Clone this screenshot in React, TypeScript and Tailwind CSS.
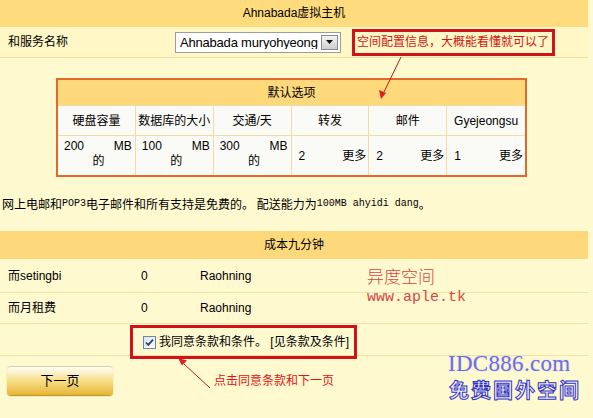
import React from 'react'

const plans = [
  { title: '硬盘容量', amount: '200', unit: 'MB', tail: '的' },
  { title: '数据库的大小', amount: '100', unit: 'MB', tail: '的' },
  { title: '交通/天', amount: '300', unit: 'MB', tail: '的' },
  { title: '转发', amount: '2', more: '更多' },
  { title: '邮件', amount: '2', more: '更多' },
  { title: 'Gyejeongsu', amount: '1', more: '更多' },
]

const fees = [
  { name: '而setingbi', price: '0', cycle: 'Raohning' },
  { name: '而月租费', price: '0', cycle: 'Raohning' },
]

function Mono({ children }: { children: React.ReactNode }) {
  return <span className="[font-family:'Liberation_Mono',monospace] text-[10px]">{children}</span>
}

export default function App() {
  return (
    <div className="relative w-[593px] h-[418px] overflow-hidden bg-[#FFF9D0] text-[12px] text-black [font-family:'Liberation_Sans','Noto_Sans_CJK_SC',sans-serif]">
      <div className="w-[588px]">
        {/* title bar */}
        <div className="h-[27px] bg-[#FEDC7E] flex items-center justify-center pb-[2px]">Ahnabada虚拟主机</div>

        {/* service name row */}
        <div className="h-[31px] bg-[#FFF7C6] border-b border-[#F2E2A2] flex items-center">
          <div className="w-[175px] pl-[8px]">和服务名称</div>
          <div className="w-[166px] h-[21px] bg-white border border-[#9c9c9c] flex items-center">
            <span className="flex-1 pl-[4px] text-[13px] leading-none whitespace-nowrap overflow-hidden tracking-[-0.2px]">Ahnabada muryohyeong</span>
            <span className="shrink-0 w-[17px] h-[15px] mr-[2px] bg-gradient-to-b from-[#f4f4f4] to-[#cfcfcf] border border-[#8a8a8a] flex items-center justify-center">
              <svg width="7" height="4" viewBox="0 0 7 4"><path d="M0 0h7L3.5 4z" fill="#111" /></svg>
            </span>
          </div>
          <div className="ml-[11px] w-[203px] h-[27px] border-[3px] border-[#D0121A] flex items-center pl-[2px] text-[#D01818] whitespace-nowrap">
            空间配置信息，大概能看懂就可以了
          </div>
        </div>

        {/* plan table */}
        <div className="ml-[56px] mt-[20px] w-[471px] border-2 border-[#E2692E] bg-[#FAFAF6]">
          <div className="h-[26px] bg-[#FDD97B] flex items-center justify-center border-b border-[#F1DCA2]">默认选项</div>
          <div className="grid grid-cols-6">
            {plans.map((p, i) => (
              <div key={p.title} className={`h-[30px] flex items-center justify-center border-b border-[#F1DCA2] ${i < 5 ? 'border-r' : ''}`}>
                {p.title}
              </div>
            ))}
            {plans.map((p, i) => (
              <div key={p.title + '-v'} className={`h-[39px] border-[#F1DCA2] ${i < 5 ? 'border-r' : ''}`}>
                {p.unit ? (
                  <div className="pt-[3px] leading-[15px]">
                    <div className="flex justify-between pl-[6px] pr-[3px]"><span>{p.amount}</span><span>{p.unit}</span></div>
                    <div className="text-center pl-[4px]">{p.tail}</div>
                  </div>
                ) : (
                  <div className="h-full flex items-center justify-between pl-[7px] pr-[2px]">
                    <span>{p.amount}</span>
                    <span>{p.more}</span>
                  </div>
                )}
              </div>
            ))}
          </div>
        </div>

        {/* note */}
        <div className="h-[54px] flex items-center pl-[2px] pb-[1px] [font-family:'Noto_Sans_CJK_SC',sans-serif]">
          网上电邮和<Mono>POP3</Mono>电子邮件和所有支持是免费的。&nbsp;配送能力为<Mono>100MB ahyidi dang</Mono>。
        </div>

        {/* fees */}
        <div className="h-[28px] bg-[#FDD97B] flex items-center justify-center">成本九分钟</div>
        {fees.map((f, i) => (
          <div key={f.name} className={`${i === 0 ? 'h-[34px]' : 'h-[31px]'} border-b border-[#F2E2A2] flex items-center`}>
            <span className="w-[141px] pl-[8px]">{f.name}</span>
            <span className="w-[59px]">{f.price}</span>
            <span>{f.cycle}</span>
          </div>
        ))}
        <div className="h-[32px] border-b border-[#F2E2A2] flex items-start pt-[1px]">
          <div className="ml-[130px] w-[227px] h-[34px] border-[3px] border-[#D0121A] flex items-center pl-[10px] gap-[3px] whitespace-nowrap">
            <span className="w-[13px] h-[13px] border border-[#6d86a8] bg-gradient-to-br from-[#dfe6ef] to-white flex items-center justify-center">
              <svg width="9" height="9" viewBox="0 0 9 9"><path d="M1 4.5l2.3 2.4L8 1.6" fill="none" stroke="#243f88" strokeWidth="1.8" /></svg>
            </span>
            <span>我同意条款和条件。 [见条款及条件]</span>
          </div>
        </div>

        {/* next step */}
        <div className="mt-[10px] flex items-center">
          <button className="ml-[7px] w-[106px] h-[29px] rounded-[4px] border-t border-[#d8cfb0] bg-gradient-to-b from-[#FFFEF6] via-[#F7DE85] to-[#E8B52C] shadow-[0_1px_1px_#b48a20] text-[13px]">
            下一页
          </button>
          <span className="ml-[101px] text-[#E01515]">点击同意条款和下一页</span>
        </div>
      </div>

      {/* watermarks */}
      <div className="absolute left-[367px] top-[266px] text-[17px] leading-[20px] text-[#D84545] [font-family:'Noto_Sans_CJK_SC',sans-serif] font-light">异度空间</div>
      <div className="absolute left-[367px] top-[289px] text-[15px] leading-[18px] text-[#D84545] [font-family:'Liberation_Mono',monospace]">www.aple.tk</div>
      <div className="absolute left-[448px] top-[354px] text-[23px] leading-[20px] tracking-[0.3px] text-[#6E6EE0] [font-family:'Liberation_Serif',serif] [text-shadow:0_0_2px_#d0d0ff]">IDC886.com</div>
      <div className="absolute left-[449px] top-[381px] text-[20px] leading-[18px] font-bold tracking-[2px] text-[#F4F4FF] [-webkit-text-stroke:1px_#3434C4] [font-family:'Noto_Sans_CJK_SC',sans-serif]">免费国外空间</div>

      {/* pointer arrows */}
      <svg className="absolute left-0 top-0 pointer-events-none" width="593" height="418">
        <line x1="401" y1="57" x2="384" y2="92" stroke="#A82020" strokeWidth="1" />
        <path d="M381 99l-2-9 7 3z" fill="#E02020" />
        <line x1="210" y1="388" x2="184" y2="364" stroke="#A82020" strokeWidth="1" />
        <path d="M178 358l9 2.5-5 5z" fill="#E02020" />
      </svg>
    </div>
  )
}
